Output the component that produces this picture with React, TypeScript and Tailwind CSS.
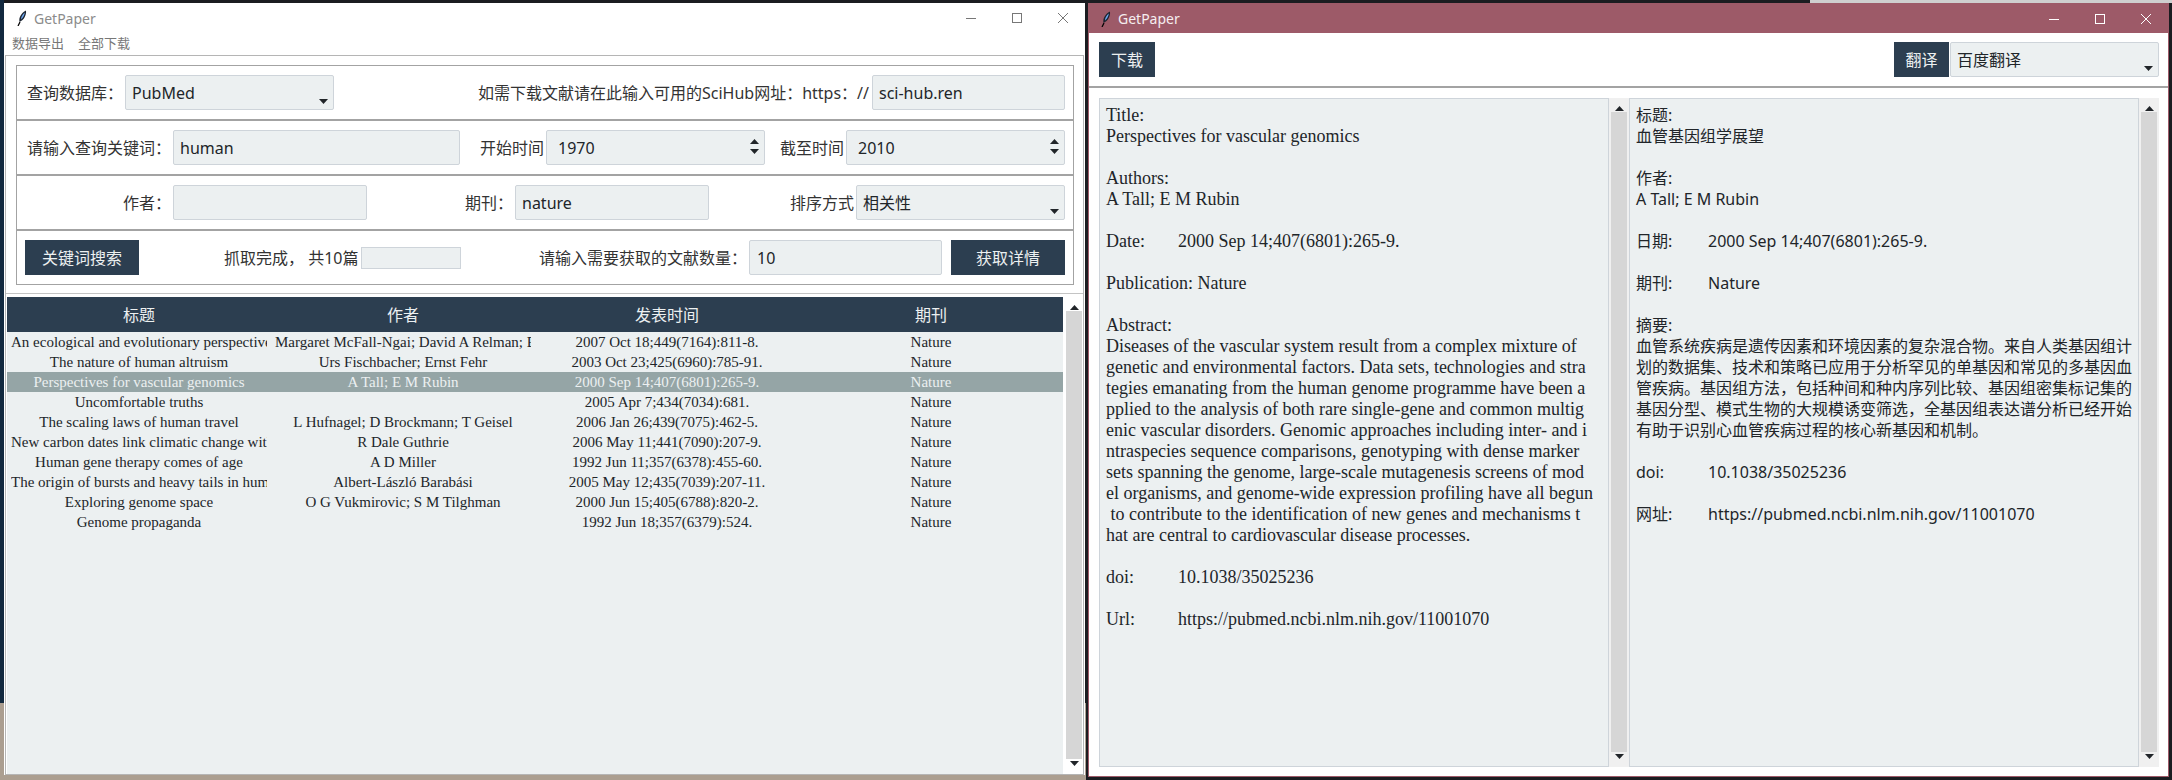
import React from 'react';

const UI_FONT = 'font-["Noto_Sans","Noto_Sans_CJK_SC",sans-serif]';
const SERIF_FONT = 'font-["Liberation_Serif","Noto_Sans_CJK_SC",serif]';

const rows = [
  ['An ecological and evolutionary perspective on human-microbe mutualism and disease', 'Margaret McFall-Ngai; David A Relman; Edward G Ruby', '2007 Oct 18;449(7164):811-8.'],
  ['The nature of human altruism', 'Urs Fischbacher; Ernst Fehr', '2003 Oct 23;425(6960):785-91.'],
  ['Perspectives for vascular genomics', 'A Tall; E M Rubin', '2000 Sep 14;407(6801):265-9.'],
  ['Uncomfortable truths', '', '2005 Apr 7;434(7034):681.'],
  ['The scaling laws of human travel', 'L Hufnagel; D Brockmann; T Geisel', '2006 Jan 26;439(7075):462-5.'],
  ['New carbon dates link climatic change with human colonization', 'R Dale Guthrie', '2006 May 11;441(7090):207-9.'],
  ['Human gene therapy comes of age', 'A D Miller', '1992 Jun 11;357(6378):455-60.'],
  ['The origin of bursts and heavy tails in human dynamics', 'Albert-László Barabási', '2005 May 12;435(7039):207-11.'],
  ['Exploring genome space', 'O G Vukmirovic; S M Tilghman', '2000 Jun 15;405(6788):820-2.'],
  ['Genome propaganda', '', '1992 Jun 18;357(6379):524.'],
];

const abstractEn = [
  'Diseases of the vascular system result from a complex mixture of',
  'genetic and environmental factors. Data sets, technologies and stra',
  'tegies emanating from the human genome programme have been a',
  'pplied to the analysis of both rare single-gene and common multig',
  'enic vascular disorders. Genomic approaches including inter- and i',
  'ntraspecies sequence comparisons, genotyping with dense marker',
  'sets spanning the genome, large-scale mutagenesis screens of mod',
  'el organisms, and genome-wide expression profiling have all begun',
  ' to contribute to the identification of new genes and mechanisms t',
  'hat are central to cardiovascular disease processes.',
];

const abstractZh = [
  '血管系统疾病是遗传因素和环境因素的复杂混合物。来自人类基因组计',
  '划的数据集、技术和策略已应用于分析罕见的单基因和常见的多基因血',
  '管疾病。基因组方法，包括种间和种内序列比较、基因组密集标记集的',
  '基因分型、模式生物的大规模诱变筛选，全基因组表达谱分析已经开始',
  '有助于识别心血管疾病过程的核心新基因和机制。',
];

const Feather = () => (
  <svg width="10" height="16" viewBox="0 0 10 16" className="shrink-0">
    <path d="M1 16 L3 12" stroke="#000" strokeWidth="1.2" fill="none" />
    <path d="M2.5 12 C1.5 8 4 3 9 0.5 C9.5 5 7 10 2.5 12 Z" fill="#1c2430" />
    <path d="M4 9.5 C4 7 5.5 4.5 7.8 2.6 C7.6 5 6.2 7.8 4 9.5 Z" fill="#6ea8f0" />
  </svg>
);

const WindowControls = ({ color }: { color: string }) => (
  <div className="flex ml-auto h-full">
    <div className="w-[46px] flex items-center justify-center">
      <svg width="10" height="10" viewBox="0 0 10 10"><path d="M0 5.5 H10" stroke={color} fill="none" /></svg>
    </div>
    <div className="w-[46px] flex items-center justify-center">
      <svg width="10" height="10" viewBox="0 0 10 10"><rect x="0.5" y="0.5" width="9" height="9" stroke={color} fill="none" /></svg>
    </div>
    <div className="w-[45px] flex items-center justify-center">
      <svg width="10" height="10" viewBox="0 0 10 10"><path d="M0 0 L10 10 M10 0 L0 10" stroke={color} fill="none" /></svg>
    </div>
  </div>
);

const ArrowUp = () => (
  <svg width="9" height="5" viewBox="0 0 9 5"><path d="M4.5 0 L9 5 H0 Z" fill="#212529" /></svg>
);

const ArrowDown = () => (
  <svg width="9" height="5" viewBox="0 0 9 5"><path d="M0 0 H9 L4.5 5 Z" fill="#212529" /></svg>
);

const Field = ({ className, text, children }: { className: string; text?: string; children?: React.ReactNode }) => (
  <div className={`relative shrink-0 h-[35px] flex items-center bg-[#ecf0f1] border border-[#ced4da] rounded-[2px] text-[16px] text-[#212529] ${className}`}>
    {text}
    {children}
  </div>
);

const SelectCaret = () => (
  <div className="absolute right-[5px] bottom-[5px] flex">
    <ArrowDown />
  </div>
);

const SpinArrows = () => (
  <div className="absolute right-[5px] top-[8px] flex flex-col gap-[5px]">
    <ArrowUp />
    <ArrowDown />
  </div>
);

const Label = ({ className, children }: { className?: string; children: React.ReactNode }) => (
  <div className={`shrink-0 whitespace-nowrap text-[16px] text-[#333] ${className ?? ''}`}>{children}</div>
);

const DarkButton = ({ className, children }: { className: string; children: React.ReactNode }) => (
  <div className={`shrink-0 h-[35px] flex items-center justify-center bg-[#2c3e50] text-[#ecf0f1] text-[16px] ${className}`}>
    {children}
  </div>
);

const FormRow = ({ className, children }: { className?: string; children: React.ReactNode }) => (
  <div className={`h-[55px] flex items-center border border-[#a3a3a3] ${className ?? ''}`}>{children}</div>
);

const ScrollBar = ({ className }: { className: string }) => (
  <div className={`shrink-0 w-[20px] flex flex-col bg-[#f0f0f0] ${className}`}>
    <div className="w-[16px] h-[14px] flex items-end justify-center pb-[1px]"><ArrowUp /></div>
    <div className="w-[16px] flex-1 bg-[#d6d6d6]" />
    <div className="w-[16px] h-[15px] flex items-start justify-center pt-[2px]"><ArrowDown /></div>
  </div>
);

const Line = ({ children }: { children?: React.ReactNode }) => (
  <div className="h-[21px] leading-[21px] whitespace-pre">{children}</div>
);

const TabLine = ({ name, value }: { name: string; value: string }) => (
  <Line>
    <span className="inline-block w-[72px]">{name}</span>
    {value}
  </Line>
);

const Cell = ({ children }: { children: React.ReactNode }) => (
  <div className="w-[264px] shrink-0 px-[4px]">
    <div className="overflow-hidden whitespace-nowrap text-center">{children}</div>
  </div>
);

const SearchWindow = () => (
  <div className={`absolute left-[4px] top-[3px] w-[1081px] h-[772px] flex flex-col bg-white ${UI_FONT}`}>
    <div className="h-[30px] shrink-0 flex items-center pl-[13px]">
      <Feather />
      <span className="ml-[7px] text-[14px] text-[#8b8b8b]">GetPaper</span>
      <WindowControls color="#777" />
    </div>
    <div className="h-[22px] shrink-0 flex items-center pl-[8px] gap-[14px] text-[13px] text-[#777]">
      <span>数据导出</span>
      <span>全部下载</span>
    </div>
    <div className="flex-1 mx-[1px] flex flex-col min-h-0 border border-[#b5b5b5]">
      <div className="pl-[10px] pr-[9px] pt-[9px]">
        <FormRow className="pl-[10px]">
          <Label className="w-[98px]">查询数据库：</Label>
          <Field className="w-[209px] pl-[6px]" text="PubMed"><SelectCaret /></Field>
          <Label className="ml-auto mr-[3px]">如需下载文献请在此输入可用的SciHub网址：https：//</Label>
          <Field className="w-[193px] mr-[8px] pl-[6px]" text="sci-hub.ren" />
        </FormRow>
        <FormRow className="pl-[10px]">
          <Label className="w-[146px]">请输入查询关键词：</Label>
          <Field className="w-[287px] pl-[6px]" text="human" />
          <Label className="ml-[20px] w-[66px]">开始时间</Label>
          <Field className="w-[219px] pl-[11px]" text="1970"><SpinArrows /></Field>
          <Label className="ml-[15px] w-[66px]">截至时间</Label>
          <Field className="w-[219px] pl-[11px]" text="2010"><SpinArrows /></Field>
        </FormRow>
        <FormRow className="pl-[10px]">
          <Label className="w-[144px] mr-[2px] text-right">作者：</Label>
          <Field className="w-[194px]" />
          <Label className="ml-[98px] w-[50px]">期刊：</Label>
          <Field className="w-[194px] pl-[6px]" text="nature" />
          <Label className="ml-[81px] w-[66px]">排序方式</Label>
          <Field className="w-[209px] pl-[6px]" text="相关性"><SelectCaret /></Field>
        </FormRow>
        <FormRow className="pl-[8px]">
          <DarkButton className="w-[114px]">关键词搜索</DarkButton>
          <Label className="ml-[85px] w-[137px]">抓取完成， 共10篇</Label>
          <Field className="w-[100px] !h-[22px] !rounded-none" />
          <Label className="ml-[78px] w-[210px]">请输入需要获取的文献数量：</Label>
          <Field className="w-[193px] pl-[7px]" text="10" />
          <DarkButton className="w-[114px] ml-[9px]">获取详情</DarkButton>
        </FormRow>
      </div>
      <div className="mt-[8px] border-t border-[#c4c4c4] pt-[3px] pl-[1px] flex-1 min-h-0 flex">
        <div className={`flex-1 flex flex-col bg-[#ecf0f1] text-[15px] text-[#212529] ${SERIF_FONT}`}>
          <div className={`h-[35px] shrink-0 flex items-center bg-[#2c3e50] text-[#ecf0f1] text-[16px] ${UI_FONT}`}>
            <Cell>标题</Cell>
            <Cell>作者</Cell>
            <Cell>发表时间</Cell>
            <Cell>期刊</Cell>
          </div>
          {rows.map((r, i) => (
            <div key={i} className={`h-[20px] shrink-0 flex items-center ${i === 2 ? 'bg-[#95a5a6] text-[#ecf0f1]' : ''}`}>
              <Cell>{r[0]}</Cell>
              <Cell>{r[1]}</Cell>
              <Cell>{r[2]}</Cell>
              <Cell>Nature</Cell>
            </div>
          ))}
        </div>
        <ScrollBar className="pl-[3px] !bg-white" />
      </div>
    </div>
  </div>
);

const DetailWindow = () => (
  <div className={`absolute left-[1088px] top-[3px] w-[1081px] h-[774px] flex flex-col bg-white border border-[#9d5a68] ${UI_FONT}`}>
    <div className="h-[29px] shrink-0 flex items-center pl-[12px] bg-[#9d5a68]">
      <Feather />
      <span className="ml-[7px] text-[14px] text-[#f5eef0]">GetPaper</span>
      <WindowControls color="#fff" />
    </div>
    <div className="h-[55px] shrink-0 flex items-center pl-[10px] pr-[9px] border-b-2 border-[#a3a3a3]">
      <DarkButton className="w-[56px]">下载</DarkButton>
      <DarkButton className="w-[55px] ml-auto">翻译</DarkButton>
      <Field className="w-[209px] ml-[1px] pl-[6px]" text="百度翻译"><SelectCaret /></Field>
    </div>
    <div className="flex-1 min-h-0 flex pt-[10px] pb-[9px] pl-[10px]">
      <div className={`w-[510px] shrink-0 bg-[#ecf0f1] border border-[#ced4da] pl-[6px] pt-[6px] text-[18px] text-[#212529] ${SERIF_FONT}`}>
        <Line>Title:</Line>
        <Line>Perspectives for vascular genomics</Line>
        <Line />
        <Line>Authors:</Line>
        <Line>A Tall; E M Rubin</Line>
        <Line />
        <TabLine name="Date:" value="2000 Sep 14;407(6801):265-9." />
        <Line />
        <Line>Publication: Nature</Line>
        <Line />
        <Line>Abstract:</Line>
        {abstractEn.map((l) => <Line key={l}>{l}</Line>)}
        <Line />
        <TabLine name="doi:" value="10.1038/35025236" />
        <Line />
        <TabLine name="Url:" value="https://pubmed.ncbi.nlm.nih.gov/11001070" />
      </div>
      <ScrollBar className="pl-[2px]" />
      <div className="w-[510px] shrink-0 bg-[#ecf0f1] border border-[#ced4da] pl-[6px] pt-[6px] text-[16px] text-[#212529]">
        <Line>标题:</Line>
        <Line>血管基因组学展望</Line>
        <Line />
        <Line>作者:</Line>
        <Line>A Tall; E M Rubin</Line>
        <Line />
        <TabLine name="日期:" value="2000 Sep 14;407(6801):265-9." />
        <Line />
        <TabLine name="期刊:" value="Nature" />
        <Line />
        <Line>摘要:</Line>
        {abstractZh.map((l) => <Line key={l}>{l}</Line>)}
        <Line />
        <TabLine name="doi:" value="10.1038/35025236" />
        <Line />
        <TabLine name="网址:" value="https://pubmed.ncbi.nlm.nih.gov/11001070" />
      </div>
      <ScrollBar className="pl-[2px]" />
    </div>
  </div>
);

export default function App() {
  return (
    <div className="relative w-[2172px] h-[780px] overflow-hidden bg-[#1b1c20]">
      {/* desktop behind the windows */}
      <div className="absolute left-0 top-0 w-[4px] h-[703px] bg-[#12293f]" />
      <div className="absolute left-0 top-[703px] w-[1086px] h-[77px] bg-[#ab9e90]" />
      <div className="absolute left-[1810px] top-0 w-[362px] h-[3px] bg-[#cfcfcf]" />
      <SearchWindow />
      <DetailWindow />
    </div>
  );
}
